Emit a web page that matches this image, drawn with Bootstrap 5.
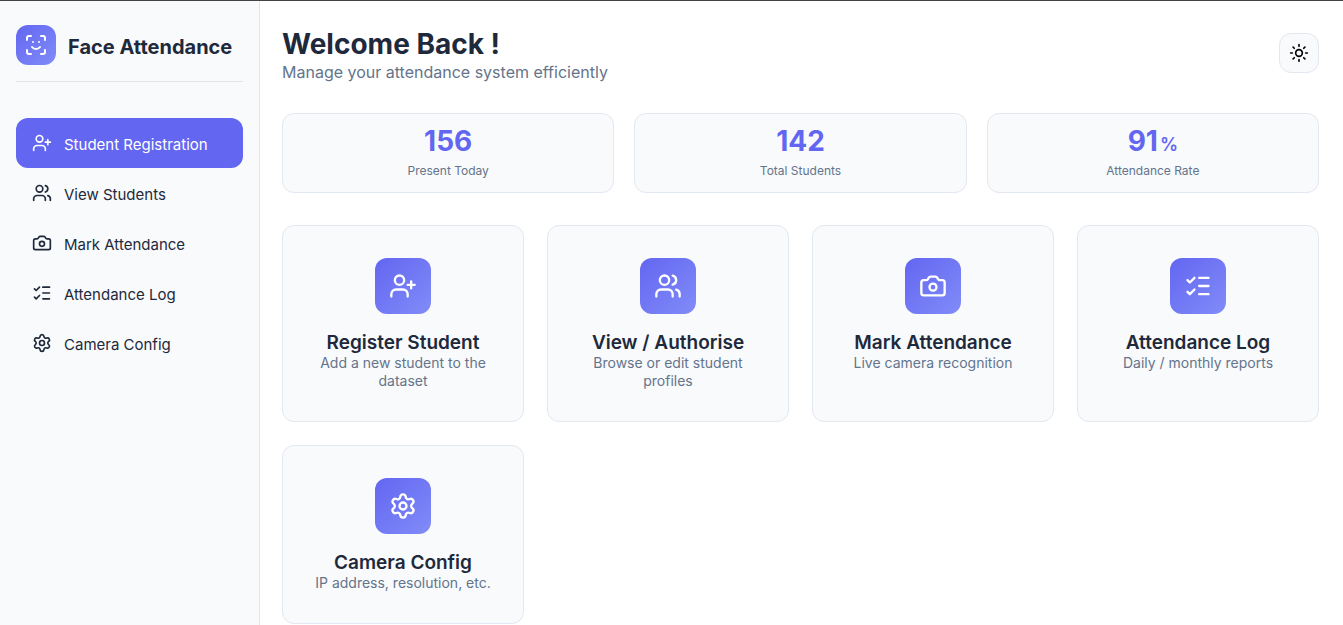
<!DOCTYPE html>
<html lang="en">
<head>
<meta charset="utf-8">
<meta name="viewport" content="width=device-width, initial-scale=1">
<title>Face Attendance</title>
<link href="https://cdn.jsdelivr.net/npm/bootstrap@5.3.0/dist/css/bootstrap.min.css" rel="stylesheet">
<style>
  :root {
    --brand: #6366f1;
    --brand-soft: #818cf8;
    --ink: #1e293b;
    --muted: #64748b;
    --line: #e2e8f0;
    --surface: #f8fafc;
  }
  body {
    font-family: Inter, "Liberation Sans", sans-serif;
    color: var(--ink);
    background: #fff;
    border-top: 1px solid #444;
  }
  a { color: inherit; text-decoration: none; }
  svg { fill: none; stroke: currentColor; stroke-width: 2; stroke-linecap: round; stroke-linejoin: round; }
  .icon-sm { width: 20px; height: 20px; }
  .icon-md { width: 24px; height: 24px; }
  .icon-lg { width: 28px; height: 28px; }

  .app-shell { min-height: calc(100vh - 1px); }
  .side-panel { width: 260px; background: var(--surface); border-right: 1px solid #e2e4e9; padding: 24px 16px; }
  .brand-row { padding-bottom: 16px; margin-bottom: 36px; border-bottom: 1px solid #e2e4e9; }
  .brand-name { font-size: 20px; line-height: 24px; }
  .gradient-tile { background: linear-gradient(135deg, var(--brand), var(--brand-soft)); color: #fff; border-radius: 12px; }
  .tile-sm { width: 40px; height: 40px; }
  .tile-lg { width: 56px; height: 56px; margin: 0 auto 17px; }
  .side-panel .nav-link { color: var(--ink); font-size: 15px; line-height: 17px; padding: 15px 16px; border-radius: 12px; }
  .side-panel .nav-link.active { background: var(--brand); color: #fff; }
  .nav-text { padding-top: 3px; }

  .content-area { padding: 24px 24px 0 22px; }
  .page-title { font-size: 28px; line-height: 38px; }
  .page-sub { font-size: 16px; line-height: 18px; color: var(--muted); }
  .theme-btn { width: 40px; height: 40px; color: #000; }
  .panel { background: var(--surface); border: 1px solid var(--line); border-radius: 12px; }
  .stat-grid { display: grid; grid-template-columns: repeat(3, 1fr); gap: 20px; }
  .stat-box { padding: 9px 16px 10px; }
  .stat-value { font-size: 28px; line-height: 36px; color: var(--brand); }
  .stat-unit { font-size: 18px; line-height: 18px; margin-left: 2px; }
  .stat-label { font-size: 12px; line-height: 23px; color: var(--muted); }
  .action-grid { display: grid; grid-template-columns: repeat(auto-fill, minmax(220px, 1fr)); gap: 23px; }
  .action-box { padding: 32px 24px 31px; }
  .action-title { font-size: 19px; line-height: 23px; }
  .action-text { font-size: 14px; line-height: 18px; color: var(--muted); }
</style>
</head>
<body>
<svg class="d-none" aria-hidden="true">
  <symbol id="face" viewBox="0 0 24 24"><path d="M3 7V5a2 2 0 0 1 2-2h2M17 3h2a2 2 0 0 1 2 2v2M21 17v2a2 2 0 0 1-2 2h-2M7 21H5a2 2 0 0 1-2-2v-2M8 14s1.5 2 4 2 4-2 4-2M9 9h.01M15 9h.01"/></symbol>
  <symbol id="user-plus" viewBox="0 0 24 24"><path d="M16 21v-2a4 4 0 0 0-4-4H6a4 4 0 0 0-4 4v2M19 8v6M22 11h-6"/><circle cx="9" cy="7" r="4"/></symbol>
  <symbol id="users" viewBox="0 0 24 24"><path d="M16 21v-2a4 4 0 0 0-4-4H6a4 4 0 0 0-4 4v2M16 3.128a4 4 0 0 1 0 7.744M22 21v-2a4 4 0 0 0-3-3.87"/><circle cx="9" cy="7" r="4"/></symbol>
  <symbol id="camera" viewBox="0 0 24 24"><path d="M13.997 4a2 2 0 0 1 1.76 1.05l.486.9A2 2 0 0 0 18.003 7H20a2 2 0 0 1 2 2v9a2 2 0 0 1-2 2H4a2 2 0 0 1-2-2V9a2 2 0 0 1 2-2h1.997a2 2 0 0 0 1.759-1.048l.489-.904A2 2 0 0 1 10.004 4z"/><circle cx="12" cy="13" r="3"/></symbol>
  <symbol id="checks" viewBox="0 0 24 24"><path d="M13 5h8M13 12h8M13 19h8M3 17l2 2 4-4M3 7l2 2 4-4"/></symbol>
  <symbol id="gear" viewBox="0 0 24 24"><path d="M9.671 4.136a2.34 2.34 0 0 1 4.659 0 2.34 2.34 0 0 0 3.319 1.915 2.34 2.34 0 0 1 2.33 4.033 2.34 2.34 0 0 0 0 3.831 2.34 2.34 0 0 1-2.33 4.033 2.34 2.34 0 0 0-3.319 1.915 2.34 2.34 0 0 1-4.659 0 2.34 2.34 0 0 0-3.32-1.915 2.34 2.34 0 0 1-2.33-4.033 2.34 2.34 0 0 0 0-3.831A2.34 2.34 0 0 1 6.35 6.051a2.34 2.34 0 0 0 3.319-1.915"/><circle cx="12" cy="12" r="3"/></symbol>
  <symbol id="sun" viewBox="0 0 24 24"><circle cx="12" cy="12" r="4"/><path d="M12 2v2M12 20v2M4.93 4.93l1.41 1.41M17.66 17.66l1.41 1.41M2 12h2M20 12h2M6.34 17.66l-1.41 1.41M19.07 4.93l-1.41 1.41"/></symbol>
</svg>

<div class="app-shell d-flex">
  <aside class="side-panel flex-shrink-0">
    <div class="brand-row d-flex align-items-center">
      <span class="gradient-tile tile-sm d-flex align-items-center justify-content-center flex-shrink-0 m-0"><svg class="icon-md"><use href="#face"/></svg></span>
      <span class="brand-name fw-bold text-nowrap ps-2 ms-1 pt-1">Face Attendance</span>
    </div>
    <nav class="nav flex-column flex-nowrap">
      <a class="nav-link active d-flex align-items-center" aria-current="page" href="#"><svg class="icon-sm me-2"><use href="#user-plus"/></svg><span class="nav-text ms-1">Student Registration</span></a>
      <a class="nav-link d-flex align-items-center" href="#"><svg class="icon-sm me-2"><use href="#users"/></svg><span class="nav-text ms-1">View Students</span></a>
      <a class="nav-link d-flex align-items-center" href="#"><svg class="icon-sm me-2"><use href="#camera"/></svg><span class="nav-text ms-1">Mark Attendance</span></a>
      <a class="nav-link d-flex align-items-center" href="#"><svg class="icon-sm me-2"><use href="#checks"/></svg><span class="nav-text ms-1">Attendance Log</span></a>
      <a class="nav-link d-flex align-items-center" href="#"><svg class="icon-sm me-2"><use href="#gear"/></svg><span class="nav-text ms-1">Camera Config</span></a>
    </nav>
  </aside>

  <main class="content-area flex-grow-1">
    <header class="d-flex align-items-center justify-content-between">
      <div>
        <h1 class="page-title fw-bold mb-0">Welcome Back !</h1>
        <p class="page-sub mb-0">Manage your attendance system efficiently</p>
      </div>
      <button type="button" class="theme-btn panel p-0 d-flex align-items-center justify-content-center" aria-label="Toggle theme"><svg class="icon-sm"><use href="#sun"/></svg></button>
    </header>

    <section class="stat-grid text-center pt-3 mt-3">
      <div class="panel stat-box">
        <div class="stat-value fw-bold">156</div>
        <div class="stat-label">Present Today</div>
      </div>
      <div class="panel stat-box">
        <div class="stat-value fw-bold">142</div>
        <div class="stat-label">Total Students</div>
      </div>
      <div class="panel stat-box">
        <div class="stat-value fw-bold">91<span class="stat-unit fw-semibold">%</span></div>
        <div class="stat-label">Attendance Rate</div>
      </div>
    </section>

    <section class="action-grid text-center pt-3 mt-3">
      <a class="panel action-box" href="#">
        <span class="gradient-tile tile-lg d-flex align-items-center justify-content-center"><svg class="icon-lg"><use href="#user-plus"/></svg></span>
        <h2 class="action-title fw-semibold mb-0">Register Student</h2>
        <p class="action-text mb-0">Add a new student to the dataset</p>
      </a>
      <a class="panel action-box" href="#">
        <span class="gradient-tile tile-lg d-flex align-items-center justify-content-center"><svg class="icon-lg"><use href="#users"/></svg></span>
        <h2 class="action-title fw-semibold mb-0">View / Authorise</h2>
        <p class="action-text mb-0">Browse or edit student profiles</p>
      </a>
      <a class="panel action-box" href="#">
        <span class="gradient-tile tile-lg d-flex align-items-center justify-content-center"><svg class="icon-lg"><use href="#camera"/></svg></span>
        <h2 class="action-title fw-semibold mb-0">Mark Attendance</h2>
        <p class="action-text mb-0">Live camera recognition</p>
      </a>
      <a class="panel action-box" href="#">
        <span class="gradient-tile tile-lg d-flex align-items-center justify-content-center"><svg class="icon-lg"><use href="#checks"/></svg></span>
        <h2 class="action-title fw-semibold mb-0">Attendance Log</h2>
        <p class="action-text mb-0">Daily / monthly reports</p>
      </a>
      <a class="panel action-box" href="#">
        <span class="gradient-tile tile-lg d-flex align-items-center justify-content-center"><svg class="icon-lg"><use href="#gear"/></svg></span>
        <h2 class="action-title fw-semibold mb-0">Camera Config</h2>
        <p class="action-text mb-0">IP address, resolution, etc.</p>
      </a>
    </section>
  </main>
</div>
<script src="https://cdn.jsdelivr.net/npm/bootstrap@5.3.0/dist/js/bootstrap.bundle.min.js"></script>
</body>
</html>
